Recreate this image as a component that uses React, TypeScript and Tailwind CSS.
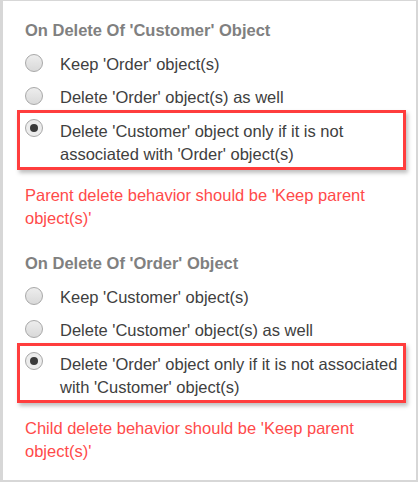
import clsx from "clsx";

type Option = { label: string; checked?: boolean };

const sections: { title: string; options: Option[]; error: string }[] = [
    {
        title: "On Delete Of 'Customer' Object",
        options: [
            { label: "Keep 'Order' object(s)" },
            { label: "Delete 'Order' object(s) as well" },
            { label: "Delete 'Customer' object only if it is not associated with 'Order' object(s)", checked: true },
        ],
        error: "Parent delete behavior should be 'Keep parent object(s)'",
    },
    {
        title: "On Delete Of 'Order' Object",
        options: [
            { label: "Keep 'Customer' object(s)" },
            { label: "Delete 'Customer' object(s) as well" },
            { label: "Delete 'Order' object only if it is not associated with 'Customer' object(s)", checked: true },
        ],
        error: "Child delete behavior should be 'Keep parent object(s)'",
    },
];

function Radio({ checked }: { checked?: boolean }) {
    return (
        <div
            className={clsx(
                "w-[18px] h-[18px] shrink-0 rounded-full border border-[#a8a8a8] flex items-center justify-center",
                checked ? "bg-[#ececec]" : "bg-gradient-to-b from-[#ededed] to-[#d9d9d9]"
            )}
        >
            {checked && <div className="w-[8px] h-[8px] rounded-full bg-[#3a3a3a]"></div>}
        </div>
    );
}

export default function App() {
    return (
        <div
            className="w-[418px] h-[482px] bg-white border-l-[3px] border-t border-r-2 border-b-2 border-[#d7d7d7] pl-[22px] pr-[16px] pt-[18px] text-[16.5px] leading-[23px]"
            style={{ fontFamily: '"Liberation Sans", Arial, sans-serif' }}
        >
            {sections.map((section, i) => (
                <div key={i} className={clsx(i > 0 && "mt-[22px]")}>
                    <h2 className="font-bold text-[#808080]">{section.title}</h2>
                    {section.options.map((opt, j) =>
                        opt.checked ? (
                            <div
                                key={j}
                                className="mt-[1px] -ml-[8px] -mr-[6px] border-[3px] border-[#ff3d3d] pl-[5px] pr-[2px] pt-[7px] pb-[1px] flex items-start gap-[17px] shadow-[2px_3px_4px_rgba(0,0,0,0.25)]"
                            >
                                <div className="-mt-[1px]">
                                    <Radio checked />
                                </div>
                                <span className="text-[#404040]">{opt.label}</span>
                            </div>
                        ) : (
                            <div key={j} className={clsx("flex items-start gap-[17px]", j === 0 ? "mt-[11px]" : "mt-[10px]")}>
                                <div className="mt-[1px]">
                                    <Radio />
                                </div>
                                <span className="text-[#404040]">{opt.label}</span>
                            </div>
                        )
                    )}
                    <p className="mt-[14px] text-[#ff4a4a]">{section.error}</p>
                </div>
            ))}
        </div>
    );
}
